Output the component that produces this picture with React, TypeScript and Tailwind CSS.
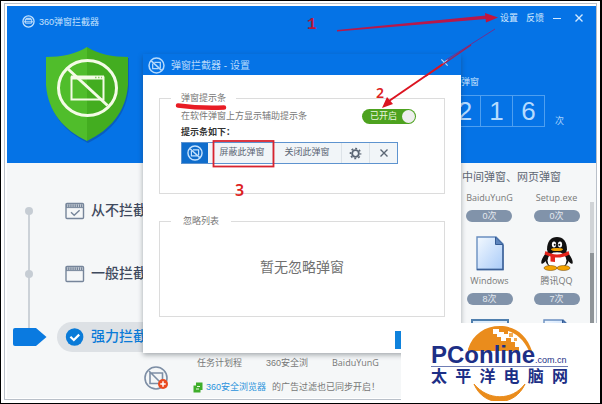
import React from 'react';

const FONT = "font-['Liberation_Sans','Noto_Sans_CJK_SC',sans-serif]";

type IconProps = { className?: string };

function BlockIcon({ className }: IconProps) {
  return (
    <svg viewBox="0 0 20 20" className={className} fill="none" stroke="currentColor" aria-hidden="true">
      <circle cx="10" cy="10" r="8.8" strokeWidth="1.8" />
      <path d="M5.5 7.5v6.2h7M7.5 6.2h7v6.6" strokeWidth="1.5" />
      <path d="M3.8 4.6l12.2 11.2" strokeWidth="1.8" />
    </svg>
  );
}

function AppLogo({ className }: IconProps) {
  return (
    <svg viewBox="0 0 14 14" className={className} fill="none" stroke="currentColor" aria-hidden="true">
      <circle cx="7" cy="7" r="6" strokeWidth="1.4" />
      <path d="M3 5h8M3.6 5v3.8h6.8V5M2 7.3h10" strokeWidth="1" />
      <path d="M4 3.6h6" strokeWidth="1.2" />
    </svg>
  );
}

function CloseIcon({ className }: IconProps) {
  return (
    <svg viewBox="0 0 10 10" className={className} fill="none" stroke="currentColor" strokeWidth="1.4" aria-hidden="true">
      <path d="M1.5 1.5l7 7M8.5 1.5l-7 7" />
    </svg>
  );
}

function GearIcon({ className }: IconProps) {
  return (
    <svg viewBox="0 0 14 14" className={className} fill="none" stroke="currentColor" aria-hidden="true">
      <circle cx="7" cy="7" r="3.6" strokeWidth="2" />
      <circle cx="7" cy="7" r="5.4" strokeWidth="1.8" strokeDasharray="2.1 2.14" strokeDashoffset="1" />
    </svg>
  );
}

function Shield() {
  return (
    <svg viewBox="0 0 86 97" className="h-[97px] w-[86px]" aria-hidden="true">
      <path d="M43 2C32 9 17 12 2 12v28c2 28 18 46 41 57 23-11 39-29 41-57V12C69 12 54 9 43 2z" fill="#0b4fa8" opacity=".6" />
      <path d="M42 1C31 8 16 11 1 11v28c2 27 18 45 41 56z" fill="#50bd2b" />
      <path d="M42 1c11 7 26 10 41 10v28c-2 27-18 45-41 56z" fill="#43ad20" />
      <g fill="none" stroke="#f4fbe6">
        <rect x="26.5" y="31.5" width="32" height="22" strokeWidth="2" />
        <path d="M26 31.5h33" strokeWidth="4" />
        <path d="M50 31.5h7" strokeWidth="1.5" stroke="#8acb6a" strokeDasharray="1.5 1.5" />
        <path d="M22.5 22.5l40 37" strokeWidth="3" />
        <ellipse cx="42.5" cy="42" rx="29" ry="27.5" strokeWidth="3" />
      </g>
    </svg>
  );
}

function WindowIcon({ checked }: { checked?: boolean }) {
  return (
    <svg viewBox="0 0 20 18" className="h-[18px] w-5" fill="none" stroke="#76859a" aria-hidden="true">
      <rect x="1" y="1.5" width="17.5" height="15" rx="1" strokeWidth="1.4" />
      <path d="M1 3.6h17.5" strokeWidth="2.6" strokeDasharray="1.5 .6" />
      <path d="M1 5.6h17.5" strokeWidth="1" />
      {checked && <path d="M6 10.2l3.2 3 5.4-5" strokeWidth="1.4" />}
    </svg>
  );
}

function CheckBadge() {
  return (
    <svg viewBox="0 0 20 18" className="h-[18px] w-5" aria-hidden="true">
      <circle cx="9.6" cy="9" r="8.8" fill="#0a7bd8" />
      <path d="M5.4 8.8l3.4 3.2 5.4-5.4" fill="none" stroke="#fff" strokeWidth="2.2" />
    </svg>
  );
}

function DocIcon() {
  return (
    <svg viewBox="0 0 30 35" className="h-[35px] w-[30px]" aria-hidden="true">
      <defs>
        <linearGradient id="doc" x1="0" y1="0" x2="1" y2="1">
          <stop offset="0" stopColor="#f3f9ff" />
          <stop offset="1" stopColor="#a9cbf8" />
        </linearGradient>
      </defs>
      <path d="M2 1h19l7 7v25.5H2z" fill="url(#doc)" stroke="#6a8fc0" strokeWidth="1.4" />
      <path d="M2 33.5h26V9" fill="none" stroke="#3b5f96" strokeWidth="1.4" />
      <path d="M20.5 1v7.5H28z" fill="#5d85bd" stroke="#345b94" />
    </svg>
  );
}

function PenguinIcon() {
  return (
    <svg viewBox="0 0 34 35" className="h-[35px] w-[34px]" aria-hidden="true">
      <path d="M7 16C3 20 .5 25 1.5 27.5c1 1 3-1 4.5-3zM27 16c4 4 6.5 9 5.500 11.500-1 1-3-1-4.500-3z" fill="#111" />
      <ellipse cx="17" cy="22" rx="12" ry="11" fill="#111" />
      <ellipse cx="17" cy="24.5" rx="9.5" ry="8.5" fill="#fff" />
      <ellipse cx="10.5" cy="32" rx="6.5" ry="2.5" fill="#f5a400" stroke="#6b4300" strokeWidth=".5" />
      <ellipse cx="23.5" cy="32" rx="6.5" ry="2.5" fill="#f5a400" stroke="#6b4300" strokeWidth=".5" />
      <path d="M7 14C7 5 11 1 17 1s10 4 10 13c0 3-20 3-20 0z" fill="#111" />
      <ellipse cx="14" cy="8.5" rx="2.1" ry="3" fill="#fff" />
      <ellipse cx="20" cy="8.5" rx="2.1" ry="3" fill="#fff" />
      <circle cx="14.7" cy="8.7" r="1" fill="#111" />
      <circle cx="19.3" cy="8.7" r="1" fill="#111" />
      <ellipse cx="17" cy="13.5" rx="6" ry="1.6" fill="#f5a400" />
      <path d="M5.5 15c7 4.500 16 4.500 23 0l1 3.500c-5 2.500-9 3.300-14.500 3v4.500l-4.500-.5v-5c-2.500-.6-4-1.200-6-2.200z" fill="#e3241b" />
    </svg>
  );
}

function PlusIcon() {
  return (
    <svg viewBox="0 0 26 26" className="size-[26px]" fill="none" aria-hidden="true">
      <circle cx="12" cy="12" r="11" stroke="#7d8ea5" strokeWidth="1.6" />
      <path d="M6 7h12.500v10.500H6zM5 5l13 13" stroke="#7d8ea5" strokeWidth="1.6" />
      <circle cx="19" cy="18" r="5" fill="#ea4a1f" />
      <path d="M16.300 18h5.400M19 15.300v5.400" stroke="#fff" strokeWidth="1.5" />
    </svg>
  );
}

const levels = [
  { name: '从不拦截', icon: <WindowIcon checked /> },
  { name: '一般拦截', icon: <WindowIcon /> },
  { name: '强力拦截', icon: <CheckBadge />, active: true },
];

const apps = [
  { name: 'BaiduYunG', count: '0次' },
  { name: 'Setup.exe', count: '0次' },
  { name: 'Windows', count: '8次', icon: <DocIcon /> },
  { name: '腾讯QQ', count: '7次', icon: <PenguinIcon /> },
];

function Header() {
  return (
    <header className="bg-[#0573e6] text-white">
      <div className="flex h-7 items-start justify-between pr-3 pl-[15px] text-[9px] leading-3">
        <div className="flex items-center gap-1 pt-[9px] text-[#c5e2fd]">
          <AppLogo className="size-[13px]" />
          <h1>360弹窗拦截器</h1>
        </div>
        <div className="flex items-center gap-2 pt-1.5 text-[#d3e9ff]">
          <button type="button">设置</button>
          <button type="button">反馈</button>
          <button type="button" aria-label="最小化" className="flex w-[10px] justify-center">
            <span className="h-px w-2 bg-current" />
          </button>
          <button type="button" aria-label="关闭" className="pl-1">
            <CloseIcon className="size-[10px]" />
          </button>
        </div>
      </div>
      <div className="flex items-start justify-between pt-3 pr-[32px] pb-5 pl-[38px]">
        <Shield />
        <div className="pt-[30px]">
          <p className="pl-3 text-[9px] leading-3 text-[#c5e2fd]">弹窗</p>
          <div className="mt-[7px] flex items-end gap-[10px]">
            <div className="flex border border-[#4e9ff0] text-[26px] leading-[30px] text-[#b5dbff]">
              <span className="w-[31px] border-r border-[#4e9ff0] text-center">2</span>
              <span className="w-8 border-r border-[#4e9ff0] text-center">1</span>
              <span className="w-[31px] text-center">6</span>
            </div>
            <span className="text-[9px] leading-3 text-[#a9d2fb]">次</span>
          </div>
        </div>
      </div>
    </header>
  );
}

function LevelList() {
  return (
    <ul className="relative flex flex-col gap-8 pt-8">
      <li className="absolute top-[45px] bottom-4 left-[21px] w-0.5 bg-[#ccd2d8]" aria-hidden="true" />
      {levels.map((level) => (
        <li key={level.name} className="relative flex h-[31px] items-center">
          <span className="flex w-[50px] justify-start">
            {level.active ? (
              <svg viewBox="0 0 36 20" className="ml-[5px] h-5 w-9" aria-hidden="true">
                <path d="M3 1h21l10.500 9L24 19H3q-2 0-2-2V3q0-2 2-2z" fill="#0a7ae0" />
              </svg>
            ) : (
              <span className="ml-[18px] size-2 rounded-full bg-[#c6cdd4]" />
            )}
          </span>
          <button
            type="button"
            className={`flex h-[30px] flex-1 items-center gap-1.5 rounded-l-full pl-2 text-[14px] font-medium ${
              level.active ? 'bg-[#dde1e5] text-[#0a7bd8]' : 'text-[#3f4a5e]'
            }`}
          >
            {level.icon}
            {level.name}
          </button>
        </li>
      ))}
    </ul>
  );
}

function AppGrid() {
  return (
    <aside className="flex w-[142px] flex-col pt-[7px]">
      <p className="pl-2 text-[11px] leading-[14px] whitespace-nowrap text-[#5d6673]">中间弹窗、网页弹窗</p>
      <div className="mt-1 flex">
        <ul className="grid flex-1 grid-cols-2 justify-items-center gap-y-[14px] pl-0.5">
          {apps.map((app) => (
            <li key={app.name} className="flex flex-col items-center text-[9px]">
              {app.icon}
              <span className="mt-1 leading-3 text-[#777] font-['Open_Sans','Noto_Sans_CJK_SC',sans-serif]">
                {app.name}
              </span>
              <span className="mt-1.5 h-3 w-[46px] rounded-full bg-[#8193aa] text-center leading-3 text-[#e4e9ef]">
                {app.count}
              </span>
            </li>
          ))}
          <li>
            <span className="block h-5 w-[38px] border-2 border-[#4f7fae] bg-[#dcebfa]" />
          </li>
          <li>
            <DocIcon />
          </li>
        </ul>
        <div className="mt-[14px] flex w-1 flex-col">
          <div className="h-[51px] bg-[#d0d3d6]" />
          <div className="flex-1 bg-[#8f9498]" />
        </div>
        <div className="w-0.5" />
      </div>
    </aside>
  );
}

function StatusFooter() {
  return (
    <footer className="mt-[5px] flex pl-[137px] text-[9px] leading-3 whitespace-nowrap text-[#777]">
      <div className="pt-[9px]">
        <PlusIcon />
      </div>
      <div className="pl-[27px]">
        <div className="flex gap-6">
          <span>任务计划程</span>
          <span>360安全浏</span>
          <span className="font-['Open_Sans',sans-serif]">BaiduYunG</span>
        </div>
        <p className="mt-3 flex items-center">
          <svg viewBox="0 0 10 11" className="-ml-1 h-[11px] w-[10px]" aria-hidden="true">
            <path d="M3 0.500h6.500v7.500H7.500v2.500H.5V3.500H3z" fill="#3fae2a" />
            <path d="M4 4.500h3M3 7h3" stroke="#e9f7e4" strokeWidth="1.2" />
          </svg>
          <a href="#browser" className="ml-[3px] text-[#2a93dc]">360安全浏览器</a>
          <span className="ml-1.5">的广告过滤也已同步开启！</span>
        </p>
      </div>
    </footer>
  );
}

function SettingsDialog() {
  return (
    <section
      role="dialog"
      aria-label="弹窗拦截器 - 设置"
      className="absolute top-[53px] right-[139px] left-[142px] text-[9px] text-[#777] shadow-[0_2px_5px_rgba(40,50,60,0.4)]"
    >
      <div className="flex h-[21px] items-start justify-between bg-[#0573e6] pr-3 pl-[5px] text-[#b5d9fb]">
        <div className="flex items-center gap-1.5 pt-[3px]">
          <BlockIcon className="size-[17px]" />
          <h2 className="text-[10px] leading-4">弹窗拦截器 - 设置</h2>
        </div>
        <button type="button" aria-label="关闭设置" className="pt-1">
          <CloseIcon className="size-[9px]" />
        </button>
      </div>
      <div className="bg-white px-4 pt-[17px]">
        <fieldset className="h-[102px] border border-[#dcdcdc] pr-[28px] pl-[11px]">
          <legend className="px-[10px] leading-3">弹窗提示条</legend>
          <div className="flex items-center justify-between pt-1 pl-[10px]">
            <label htmlFor="tip-bar" className="leading-4">在软件弹窗上方显示辅助提示条</label>
            <button
              id="tip-bar"
              type="button"
              role="switch"
              aria-checked="true"
              className="flex h-[15px] w-[54px] items-center justify-between rounded-full bg-[#4da21f] pr-px pl-2 leading-[15px] text-[#eaf7df]"
            >
              已开启
              <span className="size-[13px] rounded-full bg-[#eeeeee]" />
            </button>
          </div>
          <p className="pl-[10px] leading-4 font-bold text-[#333]">提示条如下：</p>
          <div className="mt-0.5 ml-[10px] flex h-[22px] w-[217px] border border-[#5d93cf] bg-[#f1f5f8] text-[#5b6674]">
            <span className="flex w-[26px] items-center justify-center bg-[#0f6dcc] text-[#c5e2fd]">
              <BlockIcon className="size-4" />
            </span>
            <button type="button" className="ml-1 w-[60px]">屏蔽此弹窗</button>
            <button type="button" className="flex-1 border-x border-[#dde3e8]">关闭此弹窗</button>
            <button type="button" aria-label="设置" className="flex w-[27px] items-center justify-center">
              <GearIcon className="size-[13px]" />
            </button>
            <button type="button" aria-label="关闭" className="flex w-7 items-center justify-center border-l border-[#dde3e8]">
              <CloseIcon className="size-[10px]" />
            </button>
          </div>
        </fieldset>
        <fieldset className="mt-[21px] h-[102px] border border-[#dcdcdc] pl-[11px]">
          <legend className="px-3 leading-3">忽略列表</legend>
          <p className="pt-[30px] pr-[11px] text-center text-[14px] leading-5 text-[#707070]">暂无忽略弹窗</p>
        </fieldset>
        <div className="flex justify-end pt-[14px] pb-1">
          <button type="button" aria-label="确定" className="h-[18px] w-[50px] bg-[#0f82dc]" />
        </div>
      </div>
    </section>
  );
}

// Red marks drawn over the window: arrows, box, underline and step numbers
function Annotations() {
  return (
    <>
      <svg width="602" height="404" viewBox="0 0 602 404" className="pointer-events-none absolute top-0 left-0" aria-hidden="true">
        <path d="M336 29L485 14.500v3.500L336 30.500z" fill="#b8184a" />
        <path d="M484 12l13 4.500-12 5z" fill="#c2153c" />
        <path d="M494 28L445 59" stroke="#6f3090" strokeWidth="1" />
        <path d="M470 44L425 75" stroke="#a8204f" strokeWidth="1.4" />
        <path d="M442 63L388 100" stroke="#dc1420" strokeWidth="2" />
        <path d="M381 107l5-11 6 7z" fill="#dc1420" />
        <path d="M177 104.500q22 3 46 2" stroke="#e81c24" strokeWidth="4.5" strokeLinecap="round" fill="none" />
        <rect x="212.500" y="140" width="60" height="25.500" fill="none" stroke="#d8232f" strokeWidth="1.8" />
      </svg>
      <span className="absolute top-4 left-[306px] text-[16px] leading-4 font-bold text-[#b5173f] font-['Liberation_Mono',monospace]">1</span>
      <span className="absolute top-[84px] left-[375px] text-[14px] leading-4 font-semibold text-[#dd2222] font-['Noto_Sans',sans-serif]">2</span>
      <span className="absolute top-[181px] left-[234px] text-[16px] leading-4 font-semibold text-[#dd2222] font-['Noto_Sans',sans-serif]">3</span>
    </>
  );
}

function Watermark() {
  return (
    <div className="absolute right-[3px] bottom-0.5 h-[78px] w-[196px] bg-white pl-[30px] text-[#1d2f86]">
      <div className="relative w-[137px] pt-[21px]">
        <svg viewBox="0 0 137 78" className="absolute top-0 left-0 h-[78px] w-[137px]" aria-hidden="true">
          <path
            d="M37 26C42 11 54 3 69 3c15 0 27 9 32 25h-3C93 17 85 10 77 8v3h-4v-2h-5V6h-6v5h4v3h4v4h5v-3h5v4h4v5h4v4H37z"
            fill="#ea8c1c"
          />
          <path d="M78 10h4v4h-4zM83 15h3v3h-3z" fill="#f3ab52" />
          <path d="M43 61c14 17 38 17 51 0-10 23-41 24-51 0z" fill="#ea8c1c" stroke="#ea8c1c" />
        </svg>
        <div className="relative flex items-end border-b border-[#6f7db4]">
          <span className="text-[24px] leading-[22px] font-bold">PConline</span>
          <span className="text-[9px] leading-3">.com.cn</span>
        </div>
        <div className="relative mt-px flex justify-between text-[16px] leading-[18px] font-bold">
          <span>太</span>
          <span>平</span>
          <span>洋</span>
          <span>电</span>
          <span>脑</span>
          <span>网</span>
        </div>
      </div>
    </div>
  );
}

export default function App() {
  return (
    <div className={`relative flex min-h-screen flex-col border border-r-2 border-black bg-white p-[3px] pt-0.5 ${FONT}`}>
      <div className="flex flex-1 flex-col border border-[#b9c0c9] bg-white p-0.5 pr-0 pb-px">
        <Header />
        <main className="flex flex-1 bg-[#f5f7f8]">
          <div className="min-w-0 flex-1">
            <LevelList />
            <StatusFooter />
          </div>
          <AppGrid />
        </main>
      </div>
      <SettingsDialog />
      <Watermark />
      <Annotations />
    </div>
  );
}
